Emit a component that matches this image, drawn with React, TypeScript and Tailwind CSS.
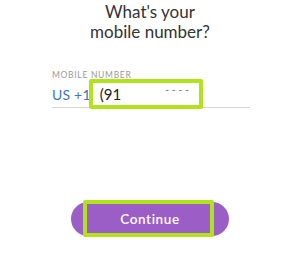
export default function App() {
  return (
    <div
      className="relative w-[300px] h-[253px] bg-white overflow-hidden"
      style={{ fontFamily: "Lato, 'Open Sans', sans-serif" }}
    >
      <div className="pt-[2px] text-center text-[17px] leading-[20px] text-[#333]">
        <div>What's your</div>
        <div>mobile number?</div>
      </div>

      <div className="mt-[28px] ml-[52px] w-[198px]">
        <div className="text-[8.5px] tracking-[0.7px] text-[#999] leading-[10px]">MOBILE NUMBER</div>
        <div className="flex items-center h-[20px] mt-[4px] text-[14px]">
          <span className="text-[#3b76bd] tracking-[0.2px]">US +1</span>
          <span className="ml-[9px] text-[15px] text-[#222]">(91</span>
          <span className="ml-[44px] -mt-[10px] text-[10px] tracking-[3px] text-[#555]">----</span>
        </div>
        <div className="mt-[3px] h-px bg-[#d6d6d6]" />
      </div>

      <div className="flex justify-center mt-[94px]">
        <div className="w-[158px] h-[34px] rounded-full bg-[#9b5ec6] flex items-center justify-center text-white font-semibold text-[13.5px] tracking-[0.6px]">
          Continue
        </div>
      </div>

      <div className="absolute left-[89px] top-[79px] w-[114px] h-[30px] border-[4px] border-[#b2e21c] rounded-[2px]" />
      <div className="absolute left-[83px] top-[200px] w-[131px] h-[37px] border-[4px] border-[#b2e21c] rounded-[2px]" />
    </div>
  );
}
